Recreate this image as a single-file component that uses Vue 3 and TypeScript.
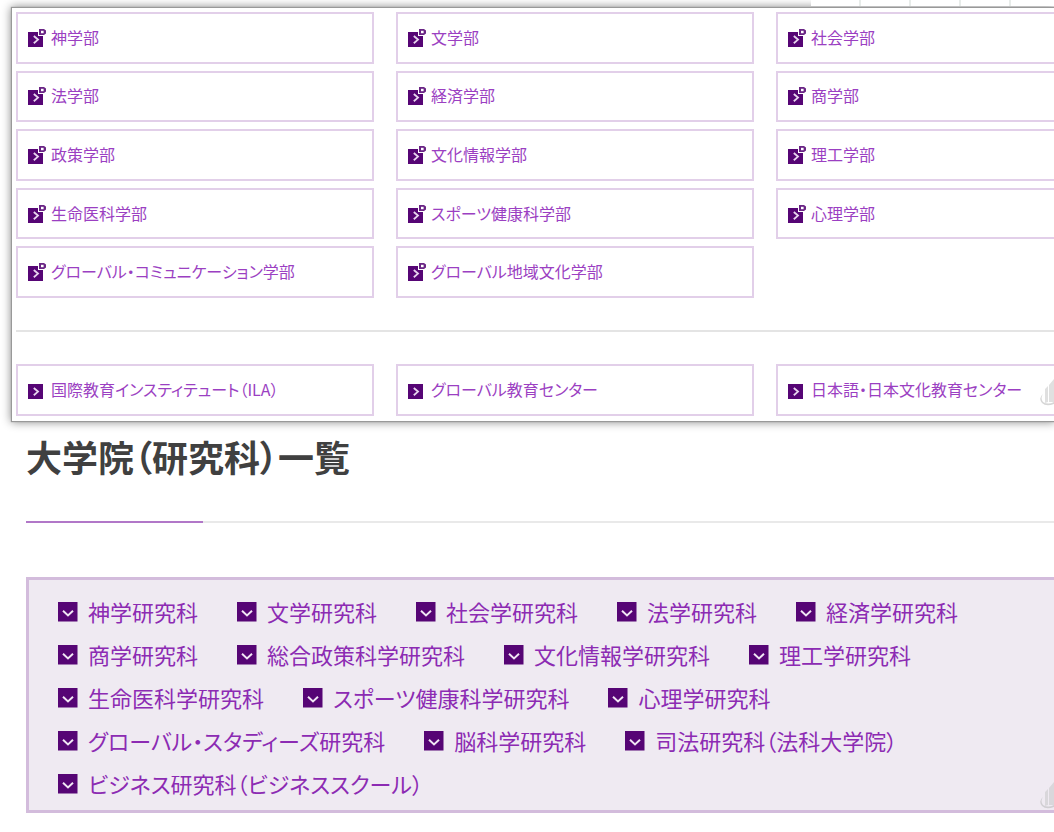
<script setup lang="ts">
interface Item {
  name: string
  external?: boolean
}

const faculties: Item[] = [
  '神学部', '文学部', '社会学部',
  '法学部', '経済学部', '商学部',
  '政策学部', '文化情報学部', '理工学部',
  '生命医科学部', 'スポーツ健康科学部', '心理学部',
  'グローバル・コミュニケーション学部', 'グローバル地域文化学部',
].map((name) => ({ name, external: true }))

const centers: Item[] = [
  { name: '国際教育インスティテュート（ILA）' },
  { name: 'グローバル教育センター' },
  { name: '日本語・日本文化教育センター' },
]

const groups = [
  { key: 'faculties', items: faculties },
  { key: 'centers', items: centers },
]

const graduateRows: string[][] = [
  ['神学研究科', '文学研究科', '社会学研究科', '法学研究科', '経済学研究科'],
  ['商学研究科', '総合政策科学研究科', '文化情報学研究科', '理工学研究科'],
  ['生命医科学研究科', 'スポーツ健康科学研究科', '心理学研究科'],
  ['グローバル・スタディーズ研究科', '脳科学研究科', '司法研究科（法科大学院）'],
  ['ビジネス研究科（ビジネススクール）'],
]
</script>

<template>
  <main class="page">
    <div class="tabs" aria-hidden="true">
      <span v-for="n in 5" :key="n" class="tab"></span>
    </div>

    <section class="panel" aria-label="学部">
      <template v-for="(group, g) in groups" :key="group.key">
        <hr v-if="g > 0" class="divider" />
        <div class="grid" :class="group.key">
          <a v-for="item in group.items" :key="item.name" class="card" href="#">
            <svg class="icon" width="18" height="18" viewBox="0 0 18 18" aria-hidden="true">
              <path d="M0 3H15V18H0Z" fill="#560575" />
              <path d="M5.8 7L10 10.6L5.8 14.2" fill="none" stroke="#e8d6ee" stroke-width="1.8" />
              <template v-if="item.external">
                <path d="M10 0H18V7H10Z" fill="#fff" />
                <path d="M11 0H16L18 1.5V4.5L16 6H11Z" fill="#6a2585" />
                <path d="M13 1.8H15.6V4.2H13Z" fill="#fff" />
              </template>
            </svg>
            <span class="label">{{ item.name }}</span>
          </a>
        </div>
      </template>
      <svg class="crest" width="14" height="30" viewBox="0 0 14 30" aria-hidden="true">
        <path d="M3 17Q0 21 3 25Q8 28 14 25V27Q6 30 2 26Q-2 21 3 17Z" fill="#d6d6d6" />
        <path d="M5 12L8 9V25L5 26ZM9 8L14 2V25H9Z" fill="#e0e0e0" />
      </svg>
    </section>

    <section class="graduate">
      <h2 class="title">大学院（研究科）一覧</h2>
      <nav class="box" aria-label="研究科">
        <div v-for="(row, i) in graduateRows" :key="i" class="row">
          <a v-for="name in row" :key="name" class="link" href="#">
            <svg class="mark" width="20" height="20" viewBox="0 0 20 20" aria-hidden="true">
              <rect width="19.5" height="19.5" fill="#560575" />
              <path d="M5 8.8L10 13.4L15 8.8" fill="none" stroke="#f0e6f4" stroke-width="2" />
            </svg>
            <span class="label">{{ name }}</span>
          </a>
        </div>
        <svg class="crest" width="14" height="30" viewBox="0 0 14 30" aria-hidden="true">
          <path d="M3 17Q0 21 3 25Q8 28 14 25V27Q6 30 2 26Q-2 21 3 17Z" fill="#d0ced2" />
          <path d="M5 12L8 9V25L5 26ZM9 8L14 2V25H9Z" fill="#d9d7db" />
        </svg>
      </nav>
    </section>
  </main>
</template>

<style>
body {
  margin: 0;
  background: #fff;
}
</style>

<style scoped>
.page {
  position: relative;
  overflow: hidden;
  padding: 8px 0 19px;
  font-family: "Noto Sans CJK JP", sans-serif;
  font-feature-settings: "palt";
}
.tabs {
  position: absolute;
  top: 0;
  right: 0;
  z-index: 1;
  display: flex;
  width: 243px;
  height: 6px;
  background: #fff;
}
.tab {
  flex: 0 0 48px;
  border-right: 2px solid #e8ecea;
}
.panel {
  position: relative;
  margin-left: 12px;
  padding: 4px 0 5px 4px;
  background: #fff;
  box-shadow: 0 0 1px 1px #999, 0 0 9px 1px #888;
}
.grid {
  display: grid;
  grid-template-columns: repeat(3, 1fr);
  grid-auto-rows: 1fr;
  gap: 7px 22px;
  margin-right: -80px;
}
.faculties {
  height: 286px;
}
.centers {
  height: 52px;
}
.card {
  display: flex;
  align-items: center;
  box-sizing: border-box;
  padding: 0 10px;
  border: 2px solid #e2cfe9;
  color: #9b3fc2;
  font-size: 16px;
  line-height: 24px;
  text-decoration: none;
}
.icon {
  flex: none;
  margin-right: 5px;
}
.label {
  padding-bottom: 2px;
}
.divider {
  height: 2px;
  margin: 32px 0;
  border: 0;
  background: #e4e4e4;
}
.crest {
  position: absolute;
  right: 0;
  bottom: 14px;
}
.graduate {
  margin-left: 26px;
}
.title {
  position: relative;
  margin: 0;
  padding: 9px 0 39px;
  border-bottom: 2px solid #e9e9e9;
  color: #404040;
  font-size: 36px;
  line-height: 52px;
  font-weight: 700;
}
.title::after {
  content: "";
  position: absolute;
  left: 0;
  bottom: -2px;
  width: 177px;
  height: 2px;
  background: #b177c8;
}
.box {
  position: relative;
  margin-top: 54px;
  padding: 10px 0 5px 29px;
  border: 3px solid #d3bcdc;
  border-right: 0;
  background: #efeaf2;
}
.row {
  display: flex;
  gap: 39px;
  height: 43px;
}
.link {
  display: flex;
  align-items: center;
  color: #8c2bb3;
  font-size: 22px;
  line-height: 32px;
  text-decoration: none;
  white-space: nowrap;
}
.mark {
  flex: none;
  margin-right: 10px;
}
.box .crest {
  bottom: 0;
}
</style>
